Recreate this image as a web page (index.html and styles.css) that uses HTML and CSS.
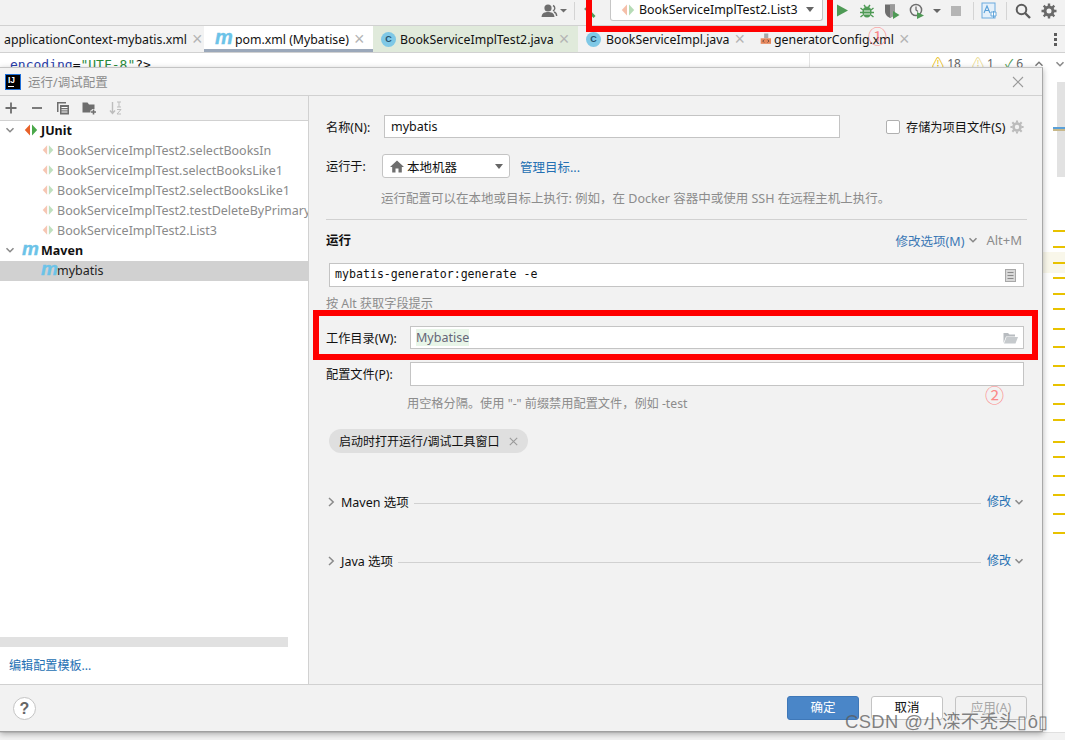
FILE: index.html
```html
<!DOCTYPE html>
<html lang="zh">
<head>
<meta charset="utf-8">
<title>运行/调试配置</title>
<link rel="stylesheet" href="styles.css">
</head>
<body>
<svg class="defs" width="0" height="0" aria-hidden="true">
  <symbol id="junit" viewBox="0 0 14 14">
    <path d="M6 1.5 L6 12.5 L0.8 7 Z" fill="#e8622a"/>
    <path d="M8 1.5 L8 12.5 L13.2 7 Z" fill="#4aa84a"/>
  </symbol>
  <symbol id="chev-down" viewBox="0 0 10 10">
    <path d="M1.5 3.2 L5 6.7 L8.5 3.2" fill="none" stroke="#8a8a8a" stroke-width="1.6"/>
  </symbol>
  <symbol id="chev-right" viewBox="0 0 10 10">
    <path d="M3 1 L7.2 5 L3 9" fill="none" stroke="#8a8a8a" stroke-width="1.5"/>
  </symbol>
</svg>

<div class="ide">
  <header class="toolbar">
    <svg class="t-user" width="26" height="16" viewBox="0 0 26 16"><circle cx="7" cy="5" r="3.6" fill="#6e6e6e"/><path d="M0.5 14 C1 9.5 4 9 7 9 C10 9 13 9.5 13.5 14 Z" fill="#6e6e6e"/><path d="M12 2.5 a3 3 0 0 1 0 5.5 M13 9 C15 9.5 15.5 11 15.7 13" fill="none" stroke="#6e6e6e" stroke-width="1.4"/><path d="M19 6 h7 l-3.5 3.5 Z" fill="#6e6e6e"/></svg>
    <span class="t-sep"></span>
    <svg class="t-hammer" width="16" height="16" viewBox="0 0 16 16"><path d="M2 6 L7 1.5 L9.5 4 L5 8.5 Z" fill="#6e8a6e"/><path d="M7 6 L13.5 13 L11.5 15 L5 8 Z" fill="#4d9c5a"/></svg>
    <div class="run-combo">
      <svg class="run-combo-icon" width="14" height="14"><use href="#junit"/></svg>
      <span class="run-combo-text">BookServiceImplTest2.List3</span>
      <span class="caret"></span>
    </div>
    <svg class="t-play" width="12" height="13" viewBox="0 0 12 13"><path d="M1 0.5 L12 6.5 L1 12.5 Z" fill="#4e9a55"/></svg>
    <svg class="t-icon t-bug" width="16" height="16" viewBox="0 0 16 16"><ellipse cx="8" cy="9" rx="4.6" ry="5.6" fill="#4e9a55"/><path d="M1.5 5 L4 7 M14.5 5 L12 7 M1 9.5 H4 M15 9.5 H12 M1.5 14 L4 12 M14.5 14 L12 12 M5 2 L6.5 4 M11 2 L9.5 4" stroke="#4e9a55" stroke-width="1.4"/><path d="M5 8 H11 M5 11 H11" stroke="#e8f0e8" stroke-width="1.2"/></svg>
    <svg class="t-icon" width="16" height="16" viewBox="0 0 16 16"><path d="M1 1.5 H11 V8 C11 12 8 14 6 15 C4 14 1 12 1 8 Z" fill="#6e6e6e"/><path d="M6 1.5 H11 V8 C11 12 8 14 6 15 Z" fill="#9a9a9a"/><path d="M9 8 L15.5 12 L9 16 Z" fill="#4e9a55"/></svg>
    <svg class="t-icon" width="16" height="16" viewBox="0 0 16 16"><circle cx="7" cy="7" r="5.6" fill="none" stroke="#6e6e6e" stroke-width="1.5"/><path d="M7 3.5 V7 L9 8.5" fill="none" stroke="#6e6e6e" stroke-width="1.3"/><path d="M8 9 L15 12.5 L8 16 Z" fill="#4e9a55"/></svg>
    <span class="caret small"></span>
    <span class="t-stop"></span>
    <span class="t-sep stop-sep"></span>
    <svg class="t-translate" width="16" height="18" viewBox="0 0 16 18"><rect x="1" y="1" width="13" height="15" fill="#e4f0fa" stroke="#6aaade"/><path d="M3 11 L6 4 L9 11 M4 8.5 H8" fill="none" stroke="#5aa0d8" stroke-width="1.1"/><path d="M10 10 H15 V14 H10 Z M12.5 9 V16" fill="#fff" stroke="#5aa0d8" stroke-width=".9"/></svg>
    <span class="t-sep tr-sep"></span>
    <svg class="t-search" width="16" height="16" viewBox="0 0 16 16"><circle cx="6.5" cy="6.5" r="4.8" fill="none" stroke="#5c5c5c" stroke-width="2"/><path d="M10 10 L15 15" stroke="#5c5c5c" stroke-width="2.4"/></svg>
    <svg class="t-gear" width="16" height="16" viewBox="0 0 16 16"><circle cx="8" cy="8" r="4" fill="none" stroke="#6a6a6a" stroke-width="3"/><path d="M8 0.5 V3 M8 13 V15.5 M0.5 8 H3 M13 8 H15.5 M2.7 2.7 L4.5 4.5 M11.5 11.5 L13.3 13.3 M13.3 2.7 L11.5 4.5 M4.5 11.5 L2.7 13.3" stroke="#6a6a6a" stroke-width="2.4"/></svg>
  </header>

  <nav class="tabs">
    <div class="tab tab-first"><span>applicationContext-mybatis.xml</span><span class="tab-x">×</span></div>
    <div class="tab tab-active"><span class="m-logo">m</span><span>pom.xml (Mybatise)</span><span class="tab-x">×</span></div>
    <div class="tab tab-green"><span class="c-icon">C</span><span>BookServiceImplTest2.java</span><span class="tab-x">×</span></div>
    <div class="tab tab-impl"><span class="c-icon">C</span><span>BookServiceImpl.java</span><span class="tab-x">×</span></div>
    <div class="tab tab-gen">
      <svg width="16" height="16" viewBox="0 0 16 16"><rect x="6" y="0" width="6" height="7" fill="#a8a8a8"/><rect x="1" y="7" width="15" height="8" fill="#e8875c"/><path d="M6 9 L4 11 L6 13 M11 9 L13 11 L11 13" fill="none" stroke="#333" stroke-width="1"/></svg>
      <span class="gen-name">generatorConfig.xml</span><span class="tab-x">×</span>
    </div>
    <div class="tab-more"><i></i><i></i><i></i></div>
  </nav>

  <main class="editor">
    <code class="code-line"><span class="c-attr">encoding</span>=<span class="c-str">"UTF-8"</span>?&gt;</code>
    <div class="gutter-line"></div>
    <div class="inspections">
      <span class="warn">⚠ 18</span><span class="weak">⚠ 1</span><span class="ok">✓ 6</span>
      <svg width="10" height="10" viewBox="0 0 10 10"><path d="M1.5 6.7 L5 3.2 L8.5 6.7" fill="none" stroke="#777" stroke-width="1.4"/></svg>
      <svg width="10" height="10"><use href="#chev-down"/></svg>
    </div>
    <div class="stripe">
      <div class="stripe-row"></div>
      <div class="stripe-thumb"></div>
      <i class="mark blue" style="top:74px"></i>
      <i class="mark tan" style="top:76px"></i>
      <i class="mark" style="top:177px"></i><i class="mark" style="top:193px"></i><i class="mark" style="top:209px"></i>
      <i class="mark" style="top:224px"></i><i class="mark" style="top:240px"></i><i class="mark" style="top:255px"></i>
      <i class="mark" style="top:275px"></i><i class="mark" style="top:293px"></i><i class="mark" style="top:312px"></i>
      <i class="mark" style="top:331px"></i><i class="mark" style="top:350px"></i><i class="mark" style="top:366px"></i>
      <i class="mark" style="top:388px"></i><i class="mark" style="top:403px"></i><i class="mark" style="top:422px"></i>
      <i class="mark" style="top:441px"></i><i class="mark" style="top:460px"></i><i class="mark" style="top:479px"></i>
    </div>
  </main>

  <footer class="status"></footer>

  <section class="dialog">
    <div class="dlg-title">
      <span class="ij-logo">IJ</span>
      <span class="dlg-title-text">运行/调试配置</span>
      <svg class="dlg-close" width="12" height="12" viewBox="0 0 12 12"><path d="M1 1 L11 11 M11 1 L1 11" stroke="#9a9a9a" stroke-width="1.1"/></svg>
    </div>

    <div class="dlg-body">
      <aside class="side">
        <div class="side-tools">
          <svg width="14" height="14" viewBox="0 0 14 14"><path d="M7 1.5 V12.5 M1.5 7 H12.5" stroke="#6e6e6e" stroke-width="1.8"/></svg>
          <svg width="14" height="14" viewBox="0 0 14 14"><path d="M2 7 H12" stroke="#6e6e6e" stroke-width="1.8"/></svg>
          <svg width="14" height="14" viewBox="0 0 14 14"><path d="M1 1 H10 V2.5 H2.5 V11 H1 Z" fill="#6e6e6e"/><rect x="4" y="4" width="9" height="9.5" fill="#6e6e6e"/><path d="M5.5 6.5 H11.5 M5.5 8.8 H11.5 M5.5 11 H11.5" stroke="#fff" stroke-width="1"/></svg>
          <svg width="15" height="14" viewBox="0 0 15 14"><path d="M0.5 1.5 H5.5 L7 3.5 H12.5 V11.5 H0.5 Z" fill="#6e6e6e"/><path d="M11.5 8 V14 M8.5 11 H14.5" stroke="#f2f2f2" stroke-width="3.4"/><path d="M11.5 8.5 V13.5 M9 11 H14" stroke="#6e6e6e" stroke-width="1.6"/></svg>
          <svg width="14" height="14" viewBox="0 0 14 14"><path d="M3.5 1 V12 M1 9.5 L3.5 12.5 L6 9.5" fill="none" stroke="#bdbdbd" stroke-width="1.4"/><path d="M8 1 H12 M10 1 V6 M8 6 H12 M8 8.5 H12 L8 13 H12" fill="none" stroke="#bdbdbd" stroke-width="1"/></svg>
        </div>
        <div class="tree">
          <div class="node group">
            <svg class="tw" width="10" height="10"><use href="#chev-down"/></svg>
            <svg class="gi" width="14" height="14"><use href="#junit"/></svg>
            <span>JUnit</span>
          </div>
          <div class="node leaf"><svg class="li" width="12" height="12"><use href="#junit"/></svg><span>BookServiceImplTest2.selectBooksIn</span></div>
          <div class="node leaf"><svg class="li" width="12" height="12"><use href="#junit"/></svg><span>BookServiceImplTest.selectBooksLike1</span></div>
          <div class="node leaf"><svg class="li" width="12" height="12"><use href="#junit"/></svg><span>BookServiceImplTest2.selectBooksLike1</span></div>
          <div class="node leaf"><svg class="li" width="12" height="12"><use href="#junit"/></svg><span>BookServiceImplTest2.testDeleteByPrimaryKey</span></div>
          <div class="node leaf"><svg class="li" width="12" height="12"><use href="#junit"/></svg><span>BookServiceImplTest2.List3</span></div>
          <div class="node group">
            <svg class="tw" width="10" height="10"><use href="#chev-down"/></svg>
            <span class="m-logo gi-m">m</span>
            <span>Maven</span>
          </div>
          <div class="node leaf selected"><span class="m-logo li-m">m</span><span>mybatis</span></div>
        </div>
        <div class="side-scroll"><div class="side-thumb"></div></div>
        <a class="template-link">编辑配置模板...</a>
      </aside>

      <div class="form">
        <div class="row name-row">
          <label class="lbl lbl-name">名称(N):</label>
          <div class="input name-input">mybatis</div>
          <span class="check"></span>
          <span class="check-label">存储为项目文件(S)</span>
          <svg class="store-gear" width="14" height="14" viewBox="0 0 16 16"><circle cx="8" cy="8" r="4" fill="none" stroke="#bcbcbc" stroke-width="3"/><path d="M8 0.5 V3 M8 13 V15.5 M0.5 8 H3 M13 8 H15.5 M2.7 2.7 L4.5 4.5 M11.5 11.5 L13.3 13.3 M13.3 2.7 L11.5 4.5 M4.5 11.5 L2.7 13.3" stroke="#bcbcbc" stroke-width="2.4"/></svg>
        </div>
        <div class="row target-row">
          <label class="lbl lbl-target">运行于:</label>
          <div class="select">
            <svg width="14" height="13" viewBox="0 0 14 13"><path d="M7 0.5 L14 7 H11.8 V12.5 H8.5 V8.5 H5.5 V12.5 H2.2 V7 H0 Z" fill="#6e6e6e"/></svg>
            <span class="select-text">本地机器</span>
            <span class="caret"></span>
          </div>
          <a class="link manage">管理目标...</a>
        </div>
        <p class="hint hint-target">运行配置可以在本地或目标上执行: 例如，在 Docker 容器中或使用 SSH 在远程主机上执行。</p>
        <hr class="rule">
        <div class="row section-row">
          <strong class="section-title">运行</strong>
          <a class="link modify-opts">修改选项(M)</a>
          <svg class="chev" width="10" height="10"><use href="#chev-down"/></svg>
          <span class="shortcut">Alt+M</span>
        </div>
        <div class="input cmd-input">
          <code>mybatis-generator:generate -e</code>
          <svg width="11" height="13" viewBox="0 0 11 13"><rect x="0.5" y="0.5" width="10" height="12" fill="#d8d8d8" stroke="#a8a8a8"/><path d="M2.5 3.5 H8.5 M2.5 6.5 H8.5 M2.5 9.5 H8.5" stroke="#8a8a8a"/></svg>
        </div>
        <p class="hint hint-alt">按 Alt 获取字段提示</p>
        <div class="row workdir-row">
          <label class="lbl lbl-wide">工作目录(W):</label>
          <div class="input path-input">
            <span class="path-token">Mybatise</span>
            <svg width="15" height="12" viewBox="0 0 15 12"><path d="M0.5 1 H5 L6.5 2.5 H12 V4.5 H3 L0.5 11 Z" fill="#b8bcc0"/><path d="M3.5 5 H15 L12.5 11.5 H1 Z" fill="#c6cacd"/></svg>
          </div>
        </div>
        <div class="row profile-row">
          <label class="lbl lbl-wide">配置文件(P):</label>
          <div class="input path-input"></div>
        </div>
        <p class="hint hint-profile">用空格分隔。使用 "-" 前缀禁用配置文件，例如 -test</p>
        <div class="chip"><span>启动时打开运行/调试工具窗口</span><svg width="9" height="9" viewBox="0 0 9 9"><path d="M0.8 0.8 L8.2 8.2 M8.2 0.8 L0.8 8.2" stroke="#9a9a9a" stroke-width="1.1"/></svg></div>
        <div class="row fold-row">
          <svg width="10" height="10"><use href="#chev-right"/></svg>
          <span class="fold-title">Maven 选项</span>
          <span class="fold-line"></span>
          <a class="link fold-link">修改</a>
          <svg width="10" height="10"><use href="#chev-down"/></svg>
        </div>
        <div class="row fold-row">
          <svg width="10" height="10"><use href="#chev-right"/></svg>
          <span class="fold-title">Java 选项</span>
          <span class="fold-line"></span>
          <a class="link fold-link">修改</a>
          <svg width="10" height="10"><use href="#chev-down"/></svg>
        </div>
      </div>
    </div>

    <div class="dlg-foot">
      <span class="help">?</span>
      <span class="btn btn-primary">确定</span>
      <span class="btn btn-plain">取消</span>
      <span class="btn btn-disabled">应用(A)</span>
    </div>
  </section>

  <div class="redbox redbox-run"></div>
  <div class="redbox redbox-dir"></div>
  <span class="num num-1">①</span>
  <span class="num num-2">②</span>
  <span class="watermark">CSDN @小滦不秃头▯ô▯</span>
</div>
</body>
</html>
```
FILE: styles.css
```css
* { box-sizing: border-box; }
html, body { margin: 0; padding: 0; }
body {
  font-family: "Noto Sans", "Noto Sans CJK SC", sans-serif;
  font-size: 12.5px;
  color: #111;
  background: #f2f2f2;
}
.defs { position: absolute; }
.ide {
  position: relative;
  width: 1065px;
  height: 740px;
  overflow: hidden;
  display: flex;
  flex-direction: column;
  background: #f2f2f2;
}

/* main toolbar */
.toolbar {
  height: 26px;
  flex: none;
  display: flex;
  align-items: center;
  padding-left: 541px;
  border-bottom: 1px solid #d1d1d1;
}
.t-user { margin-top: -4px; flex: none; }
.t-sep { width: 1px; height: 18px; background: #d4d4d4; margin-left: 7px; margin-top: -4px; flex: none; }
.t-hammer { margin-left: 7px; margin-top: -4px; flex: none; }
.run-combo {
  width: 213px;
  height: 21px;
  margin-left: 12px;
  margin-top: -5px;
  flex: none;
  background: #fff;
  border: 1px solid #c6c6c6;
  border-top: 0;
  border-radius: 0 0 3px 3px;
  display: flex;
  align-items: center;
  padding-left: 10px;
}
.run-combo-icon { opacity: .4; flex: none; }
.run-combo-text { margin-left: 4px; flex: 1; font-size: 12.4px; white-space: nowrap; }
.caret {
  width: 0;
  height: 0;
  border-left: 4.5px solid transparent;
  border-right: 4.5px solid transparent;
  border-top: 5px solid #666;
  flex: none;
  margin-right: 8px;
}
.t-play { margin-left: 13px; margin-top: -4px; flex: none; }
.t-icon { margin-left: 9px; margin-top: -4px; flex: none; }
.t-bug { margin-left: 11px; }
.caret.small { margin: -4px 0 0 8px; border-left-width: 4px; border-right-width: 4px; border-top-width: 4px; }
.t-stop { width: 10px; height: 10px; background: #b5b5b5; margin-left: 10px; margin-top: -4px; flex: none; }
.stop-sep { margin-left: 12px; }
.t-translate { margin-left: 7px; margin-top: -3px; flex: none; }
.tr-sep { margin-left: 9px; }
.t-search { margin-left: 8px; margin-top: -4px; flex: none; }
.t-gear { margin-left: 10px; margin-top: -4px; flex: none; }

/* tabs */
.tabs {
  height: 27px;
  flex: none;
  display: flex;
  border-bottom: 1px solid #d1d1d1;
  background: #f2f2f2;
  font-size: 12.3px;
}
.tab { display: flex; align-items: center; white-space: nowrap; height: 26px; flex: none; }
.tab-x {
  color: #b4b4b4;
  font: 18px/1 "Liberation Sans", sans-serif;
  width: 10px;
  margin-left: 5px;
  text-align: center;
  flex: none;
}
.tab-first { width: 204px; padding-left: 4px; }
.tab-active { width: 169px; background: #fff; border-bottom: 3px solid #9ba8ba; padding: 3px 0 0 11px; }
.tab-green { width: 205px; background: #e0eadb; padding-left: 8px; }
.tab-impl { width: 176px; padding-left: 8px; }
.tab-gen { width: 155px; padding-left: 6px; }
.gen-name { margin-left: 3px; }
.tab-more { margin: 0 0 0 auto; padding-right: 8px; display: flex; flex-direction: column; gap: 2px; justify-content: center; }
.tab-more i { width: 3px; height: 3px; background: #5c5c5c; display: block; }
.m-logo {
  font: italic 700 20px/1 "Liberation Sans", sans-serif;
  -webkit-text-stroke: .4px #6cc3e8;
  color: #6cc3e8;
  width: 19px;
  margin-right: 1px;
  flex: none;
  margin-top: -4px;
}
.c-icon {
  width: 15px;
  height: 15px;
  border-radius: 50%;
  background: #7fc8e6;
  color: #24506b;
  font: 700 9px/15px "Liberation Sans", sans-serif;
  text-align: center;
  margin-right: 4px;
  flex: none;
}
.tab-impl .c-icon { margin-right: 5px; }

/* editor */
.editor { flex: 1; position: relative; background: #fff; overflow: hidden; }
.code-line {
  position: absolute;
  left: 10px;
  top: 4px;
  font: 13px/16px "DejaVu Sans Mono", monospace;
  white-space: pre;
}
.c-attr { color: #2a3ea8; }
.c-str { color: #2a8a3a; }
.gutter-line { position: absolute; left: 809px; top: 0; height: 14px; width: 1px; background: #e4e4e4; }
.inspections {
  position: absolute;
  left: 932px;
  top: 3px;
  display: flex;
  align-items: center;
  gap: 11px;
  font-size: 12px;
  line-height: 16px;
  color: #666;
  white-space: nowrap;
}
.warn::first-letter { color: #e6b800; }
.weak::first-letter { color: #e8d88a; }
.ok::first-letter { color: #4e9a55; }
.stripe { position: absolute; left: 1043px; top: 0; bottom: 0; width: 22px; }
.stripe-thumb { position: absolute; right: 0; top: 29px; width: 8px; height: 95px; background: #e2e2e2; }
.stripe-row { position: absolute; left: 0; right: 0; top: 199px; height: 21px; background: #f9f7ea; }
.mark { position: absolute; right: 0; height: 2px; width: 12px; background: #e8c200; }
.mark.blue { background: #5aa0d8; }
.mark.tan { background: #c8b88a; }
.status { height: 8px; flex: none; background: #f2f2f2; border-top: 1px solid #e0e0e0; }

/* dialog window */
.dialog {
  position: absolute;
  left: 0;
  top: 67px;
  width: 1043px;
  height: 665px;
  display: flex;
  flex-direction: column;
  background: #f2f2f2;
  border-top: 1px solid #c4c4c4;
  border-right: 1px solid #a8a8a8;
  border-bottom: 1px solid #a0a0a0;
  box-shadow: 0 2px 6px rgba(0,0,0,.3);
}
.dlg-title {
  height: 28px;
  flex: none;
  display: flex;
  align-items: center;
  padding-left: 5px;
  border-bottom: 1px solid #d1d1d1;
}
.ij-logo {
  position: relative;
  width: 16px;
  height: 16px;
  background: #000;
  border: 1px solid #1e6fd9;
  color: #fff;
  font: 700 8.5px/10px "Liberation Sans", sans-serif;
  padding-left: 2px;
  flex: none;
}
.ij-logo::after {
  content: "";
  position: absolute;
  left: 2px;
  bottom: 2px;
  width: 6px;
  height: 1px;
  background: #fff;
}
.dlg-title-text { margin-left: 7px; color: #8c8c8c; font-size: 12.5px; flex: 1; }
.dlg-close { margin-right: 18px; flex: none; }
.dlg-body { flex: 1; display: flex; min-height: 0; }

/* left configuration list */
.side {
  width: 309px;
  flex: none;
  display: flex;
  flex-direction: column;
  background: #fff;
  border-right: 1px solid #d1d1d1;
}
.side-tools {
  height: 25px;
  flex: none;
  display: flex;
  align-items: center;
  gap: 12px;
  padding-left: 4px;
  background: #f2f2f2;
  border-bottom: 1px solid #d1d1d1;
}
.tree { flex: 1; overflow: hidden; }
.node { height: 20px; padding-bottom: 2px; display: flex; align-items: center; white-space: nowrap; overflow: hidden; }
.group { padding-left: 5px; font-weight: 700; }
.tw { flex: none; }
.gi { margin-left: 9px; margin-right: 3px; flex: none; }
.gi-m { width: 18px; margin-left: 7px; margin-right: 1px; font-size: 19px; margin-top: -3px; }
.leaf { padding-left: 42px; color: #8a8a8a; }
.li { opacity: .35; margin-right: 3px; flex: none; }
.selected { background: #d1d1d1; color: #222; padding-left: 41px; }
.li-m { width: 16px; margin-right: 0; font-size: 19px; margin-top: -3px; }
.side-scroll { height: 10px; flex: none; margin-bottom: 9px; }
.side-thumb { width: 288px; height: 10px; background: #e1e1e1; }
.template-link { height: 20px; flex: none; font-size: 12.1px; line-height: 20px; padding-left: 9px; margin-bottom: 8px; color: #2470b3; }

/* right form */
.form { flex: 1; padding: 19px 18px 0 17px; min-width: 0; }
.row { display: flex; align-items: center; }
.lbl { flex: none; white-space: nowrap; font-size: 12.2px; }
.lbl-name { width: 58px; }
.lbl-target { width: 56px; }
.lbl-wide { width: 84px; }
.input {
  height: 23px;
  background: #fff;
  border: 1px solid #c4c4c4;
  display: flex;
  align-items: center;
  padding-left: 6px;
}
.name-row { height: 23px; }
.name-input { width: 456px; flex: none; }
.check {
  width: 14px;
  height: 14px;
  margin-left: 46px;
  background: #fff;
  border: 1px solid #b0b0b0;
  border-radius: 2px;
  flex: none;
}
.check-label { margin-left: 6px; white-space: nowrap; flex: none; font-size: 12.2px; }
.store-gear { margin-left: 5px; flex: none; }
.target-row { height: 24px; margin-top: 16px; }
.select {
  width: 128px;
  height: 24px;
  background: #fff;
  border: 1px solid #c4c4c4;
  border-radius: 3px;
  display: flex;
  align-items: center;
  padding-left: 7px;
  flex: none;
}
.select-text { flex: 1; margin-left: 3px; }
.select .caret { margin-right: 6px; }
.link { color: #2470b3; white-space: nowrap; flex: none; }
.manage { margin-left: 10px; }
.hint { margin: 0; color: #8c8c8c; line-height: 20px; white-space: nowrap; }
.hint-target { margin-top: 11px; padding-left: 55px; }
.rule { height: 1px; margin: 10px -3px 0 0; border: 0; background: #d1d1d1; }
.section-row { height: 20px; margin-top: 10px; }
.section-title { flex: 1; font-weight: 700; margin-top: -2px; }
.chev { margin: 0 8px 0 4px; flex: none; }
.modify-opts { color: #3b78b5; }
.shortcut { color: #8c8c8c; margin-right: 2px; font-size: 13px; }
.cmd-input {
  height: 24px;
  margin: 13px 0 0 3px;
  justify-content: space-between;
  padding: 0 7px 0 5px;
}
.cmd-input code { font: 11.6px/1 "DejaVu Sans Mono", monospace; }
.hint-alt { margin-top: 7px; font-size: 12.2px; }
.workdir-row { height: 23px; margin-top: 12px; }
.profile-row { height: 24px; margin-top: 13px; }
.path-input { flex: 1; height: 100%; justify-content: space-between; padding-left: 5px; padding-right: 5px; }
.path-token { background: #e8f5e8; color: #667; line-height: 17px; }
.hint-profile { margin-top: 8px; padding-left: 81px; font-size: 12.2px; }
.chip {
  width: 199px;
  height: 24px;
  margin: 15px 0 0 3px;
  background: #dfdfdf;
  border-radius: 12px;
  display: flex;
  align-items: center;
  justify-content: space-between;
  padding: 0 10px;
  font-size: 12px;
}
.fold-row { height: 20px; margin-top: 39px; }
.fold-row > svg:first-child { margin: 0 5px 0 0; flex: none; }
.fold-title { white-space: nowrap; flex: none; margin-top: -2px; }
.fold-line { flex: 1; height: 1px; background: #d1d1d1; margin: 2px 6px 0 5px; }
.fold-link { font-size: 12px; margin-top: -2px; }
.fold-row > svg:last-child { margin-left: 3px; margin-top: -1px; flex: none; }

/* footer */
.dlg-foot {
  height: 47px;
  flex: none;
  display: flex;
  align-items: center;
  padding-left: 13px;
  border-top: 1px solid #d1d1d1;
  background: #f2f2f2;
}
.help {
  width: 23px;
  height: 23px;
  border-radius: 50%;
  background: #fff;
  border: 1px solid #c4c4c4;
  color: #666;
  font: 700 16px/21px "Liberation Sans", sans-serif;
  text-align: center;
  margin-right: 751px;
  flex: none;
}
.btn {
  width: 72px;
  height: 24px;
  line-height: 22px;
  text-align: center;
  border-radius: 3px;
  border: 1px solid #c4c4c4;
  margin-right: 12px;
  flex: none;
}
.btn-primary { background: #4a86c8; border-color: #3f78b8; color: #fff; }
.btn-plain { background: #fff; }
.btn-disabled { color: #a8a8a8; background: #f2f2f2; }

/* annotations over the screenshot */
.redbox { position: absolute; border: 6px solid #f00; pointer-events: none; }
.redbox-run { left: 586px; top: -10px; width: 247px; height: 42px; }
.redbox-dir { left: 313px; top: 310px; width: 725px; height: 50px; }
.num { position: absolute; color: #f66; opacity: .75; font: 19px/20px "Noto Sans CJK SC", sans-serif; }
.num-1 { left: 868px; top: 26px; }
.num-2 { left: 985px; top: 385px; }
.watermark {
  position: absolute;
  left: 845px;
  top: 709px;
  color: rgba(90,90,90,.75);
  font: 18.4px/26px "Liberation Sans", "Noto Sans CJK SC", sans-serif;
  letter-spacing: .4px;
  white-space: nowrap;
}
```
